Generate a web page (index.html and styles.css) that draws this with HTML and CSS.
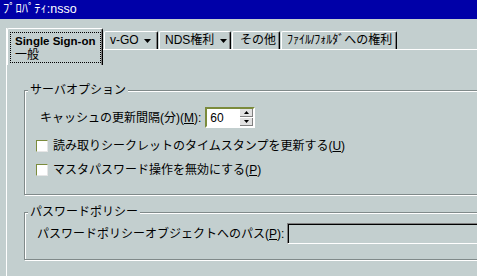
FILE: index.html
```html
<!DOCTYPE html>
<html lang="ja">
<head>
  <meta charset="UTF-8" />
  <title>ﾌﾟﾛﾊﾟﾃｨ:nsso</title>
  <link rel="stylesheet" href="styles.css">
</head>
<body>

  <div class="titlebar">ﾌﾟﾛﾊﾟﾃｨ:nsso</div>

  <div class="sheet">
    <div class="tabrow">
      <div class="tab-active">
        <div class="focus">
          <div class="tab-title">Single Sign-on</div>
          <div>一般</div>
        </div>
      </div>
      <div class="tab-rest">
        <div class="tab tab-vgo">v-GO <svg class="drop" width="7" height="4"><path d="M0 0H7L3.5 4z"/></svg></div>
        <div class="tab tab-nds">NDS権利 <svg class="drop" width="7" height="4"><path d="M0 0H7L3.5 4z"/></svg></div>
        <div class="tab tab-other">その他</div>
        <div class="tab tab-file">ﾌｧｲﾙ/ﾌｫﾙﾀﾞへの権利</div>
      </div>
    </div>

    <fieldset class="group group-server">
      <legend>サーバオプション</legend>
      <div class="row row-spin">
        <span>キャッシュの更新間隔(分)(<u>M</u>):</span>
        <div class="spin">
          <span class="spin-value">60</span>
          <span class="spin-btns">
            <span class="spin-btn"><svg width="5" height="3"><path d="M2.5 0L5 3H0z"/></svg></span>
            <span class="spin-btn"><svg width="5" height="3"><path d="M0 0H5L2.5 3z"/></svg></span>
          </span>
        </div>
      </div>
      <div class="row row-check">
        <span class="check"></span>
        <span>読み取りシークレットのタイムスタンプを更新する(<u>U</u>)</span>
      </div>
      <div class="row row-check row-check-last">
        <span class="check"></span>
        <span>マスタパスワード操作を無効にする(<u>P</u>)</span>
      </div>
    </fieldset>

    <fieldset class="group group-policy">
      <legend>パスワードポリシー</legend>
      <div class="row row-path">
        <span>パスワードポリシーオブジェクトへのパス(<u>P</u>):</span>
        <div class="path-input"></div>
      </div>
    </fieldset>
  </div>

</body>
</html>
```

FILE: styles.css
```css
* { box-sizing: border-box; margin: 0; padding: 0; }
body {
  background-color: #c3cfcf;
  color: #000;
  font-family: "Liberation Sans", "Noto Sans CJK JP", sans-serif;
  font-size: 12px;
  line-height: 14px;
  width: 477px;
  height: 276px;
  overflow: hidden;
}

.titlebar {
  height: 19px;
  background-color: #0000a8;
  color: #fff;
  padding: 2px 0 0 3px;
  line-height: 15px;
  font-size: 12.5px;
}

.sheet {
  margin: 9px 0 0 6px;
  border-left: 1px solid #fff;
  height: 248px;
  overflow: hidden;
}

/* tabs */
.tabrow {
  display: flex;
  align-items: flex-start;
}
.tab-active {
  width: 96px;
  height: 37px;
  padding: 3px 0 2px 2px;
  border-top: 1px solid #fff;
  border-left: 1px solid #fff;
  border-right: 1px solid #000;
  border-radius: 2px 2px 0 0;
  box-shadow: inset -1px 0 0 #808080;
}
.focus {
  height: 31px;
  width: 91px;
  border: 1px dotted #000;
  padding: 1px 0 0 4px;
}
.tab-title {
  font-weight: bold;
  font-size: 11.5px;
}
.tab-rest {
  flex: 1;
  height: 22px;
  display: flex;
  align-items: flex-end;
  gap: 1px;
  padding-left: 1px;
  border-bottom: 1px solid #fff;
}
.tab {
  height: 18px;
  padding: 1px 0 0 5px;
  border-top: 1px solid #fff;
  border-left: 1px solid #fff;
  border-right: 1px solid #000;
  border-radius: 2px 2px 0 0;
  box-shadow: inset -1px 0 0 #808080;
  white-space: nowrap;
}
.tab-vgo { width: 54px; }
.tab-nds { width: 72px; }
.tab-other { width: 48px; padding-left: 7px; }
.tab-file { width: 116px; padding-left: 5px; }
.drop { margin-left: 2px; vertical-align: 1px; }

/* group boxes */
.group {
  margin: 18px -20px 0 17px;
  border: 1px solid #808a8a;
  box-shadow: inset 1px 1px 0 #fff, 1px 1px 0 #fff;
  padding: 9px 0 17px 0;
}
.group legend {
  margin-left: 3px;
  padding: 0 2px;
  line-height: 15px;
  background-color: #c3cfcf;
}
.group-policy {
  margin-top: 10px;
  padding: 3px 0 15px 0;
}

.row {
  display: flex;
  align-items: center;
}
.row-spin {
  height: 21px;
  padding-left: 15px;
  gap: 4px;
}
.row-check {
  height: 15px;
  margin-top: 10px;
  padding-left: 11px;
  gap: 5px;
}
.row-check-last { margin-top: 9px; }
.row-path {
  height: 21px;
  padding-left: 12px;
  gap: 3px;
}

/* spinner */
.spin {
  display: flex;
  align-items: center;
  width: 50px;
  height: 21px;
  background-color: #fff;
  border: 2px solid;
  border-color: #7b8b3c #fff #fff #7b8b3c;
}
.spin-value {
  flex: 1;
  padding-left: 3px;
}
.spin-btns {
  display: flex;
  flex-direction: column;
  gap: 1px;
}
.spin-btn {
  width: 13px;
  height: 8px;
  display: flex;
  align-items: center;
  justify-content: center;
  background-color: #e2e2e2;
  border-right: 1px solid #808080;
  border-bottom: 1px solid #808080;
}

/* checkbox */
.check {
  width: 12px;
  height: 12px;
  background-color: #fff;
  border: 1px solid;
  border-color: #7b8b3c #e6e6e6 #e6e6e6 #7b8b3c;
}

/* path field */
.path-input {
  flex: 1;
  height: 21px;
  border: 1px solid;
  border-color: #808080 #fff #fff #808080;
  box-shadow: inset 1px 1px 0 #000;
}
```
